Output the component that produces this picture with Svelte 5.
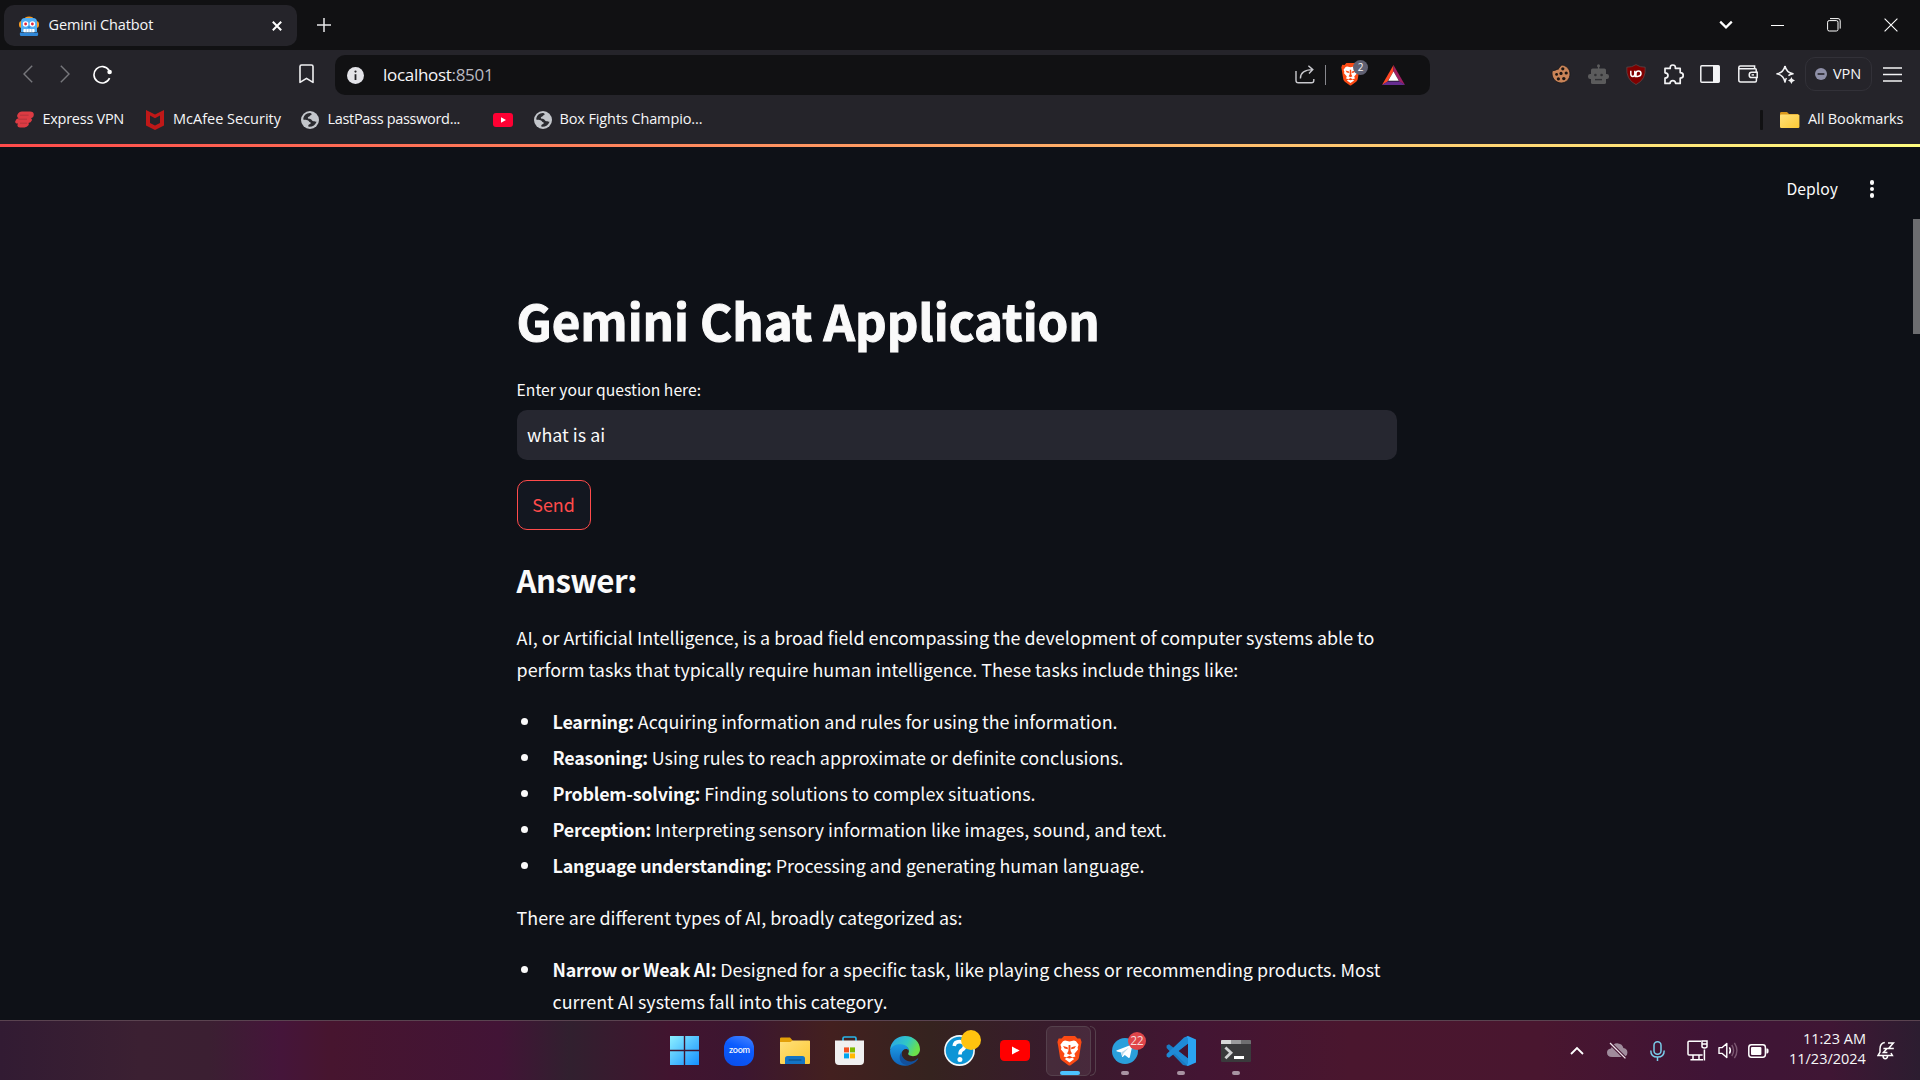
<script>
  const abilities = [
    { name: 'Learning:', text: 'Acquiring information and rules for using the information.' },
    { name: 'Reasoning:', text: 'Using rules to reach approximate or definite conclusions.' },
    { name: 'Problem-solving:', text: 'Finding solutions to complex situations.' },
    { name: 'Perception:', text: 'Interpreting sensory information like images, sound, and text.' },
    { name: 'Language understanding:', text: 'Processing and generating human language.' }
  ];
</script>

{#snippet globe()}
  <svg width="18" height="18" viewBox="0 0 18 18">
    <circle cx="9" cy="9" r="9" fill="#c3c6cb" />
    <path d="M6.2 2.6 C3.6 3.8 2.2 6 2.2 8.6 C3.6 9 5.4 9 6.6 9.2 C8 9.5 7.8 11 9.2 11.2 C10.4 11.6 9.6 13 8.4 13.2 C7.2 13.6 7 14.8 7.6 15.8 C11.4 16.2 14.4 14 15.6 10.8 C14.4 10.6 13.8 10.2 12.6 10.2 C11 10.2 11 8.8 9.8 8.2 C8.4 7.6 7 8 6.8 6.8 C6.8 5.6 8.4 6 8.8 5 C9.2 4 10.2 4.6 10.6 3.6 C10.8 3 10.4 2.4 9.8 2.2 C8.4 2 7.2 2.2 6.2 2.6 Z" fill="#2b2b30" />
  </svg>
{/snippet}

{#snippet lion(size)}
  <svg width={size} height={size * 1.2} viewBox="0 0 25 30">
    <path d="M7 0 H18 L20.4 2.6 L23.4 2.4 L24.6 6 L24 9 L22 21.5 Q21.6 23.4 20 24.6 L13.6 29.2 Q12.5 30 11.4 29.2 L5 24.6 Q3.4 23.4 3 21.5 L1 9 L.4 6 L1.6 2.4 L4.6 2.6 Z" fill="#fb4a14" />
    <path d="M8 4.6 L12.5 5.6 L17 4.6 L19 5.2 L21.6 8.8 L20.6 11.6 L21 13.4 L17.4 17.8 L18.4 20.4 L15 21.4 L17.2 23 L12.5 26.4 L7.8 23 L10 21.4 L6.6 20.4 L7.6 17.8 L4 13.4 L4.4 11.6 L3.4 8.8 L6 5.2 Z" fill="#fff" />
    <path d="M6 10 L10.6 11.2 L10.9 13.2 L7.6 12.6 Z M19 10 L14.4 11.2 L14.1 13.2 L17.4 12.6 Z M11.6 9 H13.4 L13.6 15 L15 17.4 L12.5 18.8 L10 17.4 L11.4 15 Z M9 21.6 L12.5 19.8 L16 21.6 L12.5 22.6 Z" fill="#fb4a14" />
  </svg>
{/snippet}

<div class="screen">
  <header class="tabs">
    <div class="tab">
      <svg width="20" height="20" viewBox="0 0 20 20">
        <rect x="0" y="5" width="20" height="7" rx="3" fill="#f59a23" />
        <path d="M6 1.6 Q10 -.6 14 1.6 L13 3 H7 Z" fill="#f59a23" />
        <path d="M2 6 Q2 2 6 2 H14 Q18 2 18 6 V16 H2 Z" fill="#51aef5" />
        <path d="M1 16.6 H19 Q19.6 20 18 20 H2 Q.4 20 1 16.6 Z" fill="#2f87d8" />
        <circle cx="6.6" cy="8" r="2.8" fill="#fff" /><circle cx="13.4" cy="8" r="2.8" fill="#fff" />
        <circle cx="6.6" cy="8" r="1.4" fill="#e0243a" /><circle cx="13.4" cy="8" r="1.4" fill="#e0243a" />
        <rect x="4.4" y="13" width="11.2" height="3.2" rx=".8" fill="#fff" />
        <path d="M7.2 13 V16.2 M10 13 V16.2 M12.8 13 V16.2" stroke="#6ab4ee" stroke-width=".6" />
        <rect x="8.8" y="10.4" width="2.4" height="1.6" fill="#2f87d8" />
      </svg>
      <span class="ui tab-title">Gemini Chatbot</span>
      <svg class="tab-close" width="10" height="10" viewBox="0 0 10 10"><path d="M.8 .8 L9.2 9.2 M9.2 .8 L.8 9.2" stroke="#fff" stroke-width="2" /></svg>
    </div>
    <svg class="plus" width="14" height="14" viewBox="0 0 14 14"><path d="M7 0 V14 M0 7 H14" stroke="#e8e8ea" stroke-width="1.5" /></svg>
    <div class="window">
      <span class="w1"><svg width="14" height="10" viewBox="0 0 14 10"><path d="M1.2 1.6 L7 7.4 L12.8 1.6" fill="none" stroke="#fff" stroke-width="2.2" /></svg></span>
      <span class="w2"><svg width="13" height="1" viewBox="0 0 13 1"><rect width="13" height="1" fill="#fff" /></svg></span>
      <span class="w3"><svg width="14" height="14" viewBox="0 0 14 14" fill="none" stroke="#fff"><rect x=".6" y="2.6" width="10.4" height="10.4" rx="1.6" /><path d="M3 .6 H11 Q13.2 .6 13.2 2.8 V10.6" /></svg></span>
      <span class="w4"><svg width="14" height="14" viewBox="0 0 14 14"><path d="M.6 .6 L13.4 13.4 M13.4 .6 L.6 13.4" stroke="#fff" stroke-width="1.1" /></svg></span>
    </div>
  </header>

  <div class="toolbar">
    <div class="nav">
      <span class="slot"><svg width="10" height="18" viewBox="0 0 10 18"><path d="M9.2 .8 L1 9 L9.2 17.2" fill="none" stroke="#77777c" stroke-width="1.4" /></svg></span>
      <span class="slot"><svg width="10" height="18" viewBox="0 0 10 18"><path d="M.8 .8 L9 9 L.8 17.2" fill="none" stroke="#77777c" stroke-width="1.4" /></svg></span>
      <span class="slot"><svg width="19" height="19" viewBox="0 0 19 19"><path d="M16 5.2 A8.2 8.2 0 1 0 16.6 13.2" fill="none" stroke="#fff" stroke-width="1.6" /><circle cx="16.6" cy="7" r="2.3" fill="#fff" /></svg></span>
      <span class="slot mark"><svg width="15" height="20" viewBox="0 0 15 20"><path d="M1 2.6 Q1 1 2.6 1 H12.4 Q14 1 14 2.6 V18.4 L7.5 14.4 L1 18.4 Z" fill="none" stroke="#f0f0f2" stroke-width="1.6" stroke-linejoin="round" /></svg></span>
    </div>

    <div class="address">
      <svg width="17" height="17" viewBox="0 0 17 17"><circle cx="8.5" cy="8.5" r="8.5" fill="#e3e3e8" /><path d="M8.5 7.2 V13" stroke="#222226" stroke-width="1.8" /><circle cx="8.5" cy="4.6" r="1.1" fill="#222226" /></svg>
      <span class="ui url">localhost<i>:8501</i></span>
      <div class="address-end">
        <svg width="20" height="19" viewBox="0 0 20 19"><path d="M1 6 V15.6 Q1 17.8 3.2 17.8 H16.6 Q18.8 17.8 18.8 15.6 V14 M5.4 13.4 C5.4 8 8.8 4.8 17.6 4.6 M13.4 .8 L17.8 4.6 L14 8.6" fill="none" stroke="#c9c9ce" stroke-width="1.4" /></svg>
        <b class="bar"></b>
        <span class="shield">{@render lion(19)}<em>2</em></span>
        <svg width="23" height="20" viewBox="0 0 23 20"><path d="M11.5 0 L0 20 L5.4 16.8 L11.5 6.4 Z" fill="#ff4724" /><path d="M11.5 0 L23 20 L17.6 16.8 L11.5 6.4 Z" fill="#9e1f63" /><path d="M0 20 H23 L17.6 16.4 H5.4 Z" fill="#662d91" /><path d="M11.5 6.6 L6.2 15.8 H16.8 Z" fill="#fff" /></svg>
      </div>
    </div>

    <div class="ext">
      <span class="slot"><svg width="20" height="20" viewBox="0 0 20 20"><path d="M10.6 1 C9.4 3 7.6 3.4 7.4 5.2 C5.6 4.8 4.6 7 1.4 6.6 C-.4 12.6 4 19 10.2 19 C15.2 19 19 15 19 10 C19 5 15.4 1.4 10.6 1 Z" fill="#c98458" stroke="#17171a" stroke-width=".8" /><g fill="#1b1512"><circle cx="11.8" cy="4.8" r="1.6" /><circle cx="10" cy="9.4" r="1.6" /><circle cx="15.2" cy="9" r="1.6" /><circle cx="5.6" cy="10.4" r="1.4" /><circle cx="7.4" cy="14.8" r="1.6" /><circle cx="12.8" cy="14.6" r="1.7" /></g></svg></span>
      <span class="slot"><svg width="21" height="21" viewBox="0 0 21 21"><g fill="#5b5b5c"><rect x="9.9" y="1" width="1.4" height="5" /><circle cx="10.5" cy="1.8" r="1.5" /><rect x="3" y="4.6" width="15" height="15.4" rx="1.6" /><rect x="0" y="10" width="21" height="5" rx="2.2" /></g><circle cx="7.4" cy="11" r="1.3" fill="#303033" /><circle cx="13.6" cy="11" r="1.3" fill="#303033" /><path d="M7 15.6 H14" stroke="#303033" stroke-width="1.4" /></svg></span>
      <span class="slot"><svg width="20" height="21" viewBox="0 0 20 21"><path d="M10 .6 Q14 3.4 19.2 3.2 Q20.4 15.4 10 20.6 Q-.4 15.4 .8 3.2 Q6 3.4 10 .6 Z" fill="#800000" stroke="#5c4c4e" stroke-width=".7" /><path d="M4.8 6.8 V10 Q4.8 12.4 6.8 12.4 Q8.8 12.4 8.8 10 V6.8 M8.8 12.4 H11.6 Q15 12.4 15 9.6 Q15 6.9 12.4 6.9 Q10 6.9 10 9.6 V12" fill="none" stroke="#fff" stroke-width="1.5" /></svg></span>
      <span class="slot"><svg width="21" height="21" viewBox="0 0 21 21"><path d="M2 4.4 H7.2 Q7 1 9.8 1 Q12.6 1 12.4 4.4 H17.2 V8.6 Q20.2 8.6 20.2 11.4 Q20.2 14 17.2 14 V19.4 H12.6 Q12.4 16.6 9.8 16.6 Q7.2 16.6 7 19.4 H2 V14.2 Q5 14 5 11.5 Q5 9 2 8.8 Z" fill="none" stroke="#f3f3f5" stroke-width="1.7" stroke-linejoin="round" /></svg></span>
      <span class="slot"><svg width="20" height="18" viewBox="0 0 20 18"><rect x=".8" y=".8" width="18.4" height="16.4" rx="1" fill="none" stroke="#f3f3f5" stroke-width="1.5" /><rect x="13" y=".8" width="6.4" height="16.4" fill="#f3f3f5" /></svg></span>
      <span class="slot"><svg width="20" height="18" viewBox="0 0 20 18"><path d="M18.2 7 V4.6 Q18.2 3.8 17.4 3.8 H2.4 Q.8 3.8 .8 2.4 V15 Q.8 17 2.6 17 H17.2 Q18.4 17 18.4 15.8 V12.6 M.8 2.4 Q.8 1 2.4 1 H16.6 V3.6 M19.2 7.2 H13.6 Q11.2 7.2 11.2 9.9 Q11.2 12.6 13.6 12.6 H19.2 Z" fill="none" stroke="#f3f3f5" stroke-width="1.5" /><rect x="13.6" y="9.2" width="2.4" height="1.4" fill="#f3f3f5" /></svg></span>
      <span class="slot"><svg width="19" height="19" viewBox="0 0 19 19"><path d="M9 1 Q10.2 7.4 17 8.8 Q14 9.4 12.4 10.6 M10.4 13 Q9.6 14.4 9 17 Q7.6 10.2 1 8.8 Q7.6 7.4 9 1" fill="none" stroke="#f3f3f5" stroke-width="1.5" stroke-linejoin="round" /><path d="M15.4 12 Q16 15 19 15.6 Q16 16.2 15.4 19 Q14.8 16.2 12 15.6 Q14.8 15 15.4 12 Z" fill="#f3f3f5" /></svg></span>
    </div>
    <div class="vpn"><svg width="12" height="12" viewBox="0 0 12 12"><circle cx="6" cy="6" r="6" fill="#8f90a8" /><rect x="2.6" y="5.2" width="6.8" height="1.6" fill="#25242a" /></svg><span class="ui">VPN</span></div>
    <span class="slot burger"><svg width="19" height="15" viewBox="0 0 19 15"><path d="M0 1 H19 M0 7.5 H19 M0 14 H19" stroke="#f3f3f5" stroke-width="1.6" /></svg></span>
  </div>

  <nav class="bookmarks">
    <span class="bm b1"><svg width="19" height="17" viewBox="0 0 19 17"><path d="M7 .6 H15 Q18.8 .6 18.8 3.6 Q18.8 6.8 15.8 7.2 Q17.4 7.8 16.8 9.6 Q16 12 13.4 12 Q14.4 13 13.2 14.6 Q12 16.4 9.6 16.4 H5 Q2.4 16.4 2.4 14.4 Q2.4 13.4 3 12.4 H1.4 Q-.4 12 .4 10 Q1.2 7.4 3.6 7.2 Q1.4 6 2.4 3.8 Q4 .6 7 .6 Z" fill="#dc3b43" /><path d="M5 4.2 H13.6 M3.4 8.2 H12 M5 12.2 H12" stroke="#b0343b" stroke-width=".9" /></svg><span class="ui">Express VPN</span></span>
    <span class="bm b2"><svg width="18" height="20" viewBox="0 0 18 20"><path d="M0 0 L9 4.4 L18 0 V15.4 L9 20 L0 15.4 Z M4 5.4 V13 L9 15.6 L14 13 V5.4 L9 8.2 Z" fill="#c01818" fill-rule="evenodd" /></svg><span class="ui">McAfee Security</span></span>
    <span class="bm b3">{@render globe()}<span class="ui">LastPass password...</span></span>
    <span class="bm b4"><svg width="20" height="14" viewBox="0 0 20 14"><rect width="20" height="14" rx="3" fill="#ff0033" /><path d="M8 4.2 L13 7 L8 9.8 Z" fill="#fff" /></svg></span>
    <span class="bm b5">{@render globe()}<span class="ui">Box Fights Champio...</span></span>
    <b class="sep"></b>
    <span class="bm b6"><svg width="20" height="16" viewBox="0 0 20 16"><defs><linearGradient id="fold" x1="0" y1="0" x2="1" y2="1"><stop offset="0" stop-color="#ffe07a" /><stop offset="1" stop-color="#fcc935" /></linearGradient></defs><path d="M0 1.4 Q0 0 1.4 0 H7 L9 2 H18 V6 H0 Z" fill="#d9971a" /><rect y="2.4" width="19.4" height="13.6" rx="1.2" fill="url(#fold)" /></svg><span class="ui">All Bookmarks</span></span>
  </nav>

  <main>
    <div class="decoration"></div>
    <div class="app-bar"><span class="deploy">Deploy</span><i class="dots"><b></b><b></b><b></b></i></div>
    <div class="thumb"></div>
    <div class="col">
      <h1>Gemini Chat Application</h1>
      <label for="q">Enter your question here:</label>
      <div id="q" class="input">what is ai</div>
      <button>Send</button>
      <h2>Answer:</h2>
      <p>AI, or Artificial Intelligence, is a broad field encompassing the development of computer systems able to<br />perform tasks that typically require human intelligence. These tasks include things like:</p>
      <ul>
        {#each abilities as a}
          <li><strong>{a.name}</strong> {a.text}</li>
        {/each}
      </ul>
      <p>There are different types of AI, broadly categorized as:</p>
      <ul>
        <li><strong>Narrow or Weak AI:</strong> Designed for a specific task, like playing chess or recommending products. Most<br />current AI systems fall into this category.</li>
      </ul>
    </div>
  </main>

  <footer>
    <div class="side"></div>
    <div class="apps">
      <span class="app"><svg width="29" height="29" viewBox="0 0 29 29"><defs><linearGradient id="win" x1="0" y1="0" x2="1" y2="1"><stop offset="0" stop-color="#8df0ff" /><stop offset="1" stop-color="#1490ff" /></linearGradient></defs><path d="M0 0 H13.8 V13.8 H0 Z M15.2 0 H29 V13.8 H15.2 Z M0 15.2 H13.8 V29 H0 Z M15.2 15.2 H29 V29 H15.2 Z" fill="url(#win)" /></svg></span>
      <span class="app"><span class="zoom">zoom</span></span>
      <span class="app"><svg width="30" height="27" viewBox="0 0 30 27"><path d="M0 1.6 Q0 .4 1.2 .4 H10 L13 4 H30 V10 H0 Z" fill="#e3a008" /><path d="M0 5 H10.4 L12.6 3.4 H29 Q30 3.4 30 4.4 V26 Q30 27 29 27 H1 Q0 27 0 26 Z" fill="url(#fold)" /><path d="M5 27 V21.6 Q5 19 7.6 19 H22.4 Q25 19 25 21.6 V27 Z" fill="#1474c4" /><path d="M8.6 23 H21.4" stroke="#0b4f8a" stroke-width="1.2" /></svg></span>
      <span class="app"><svg width="29" height="29" viewBox="0 0 29 29"><path d="M8 6 V2.4 Q8 1 9.4 1 H19.6 Q21 1 21 2.4 V6" fill="none" stroke="#28b5ea" stroke-width="1.7" /><path d="M0 4.6 H29 V25 Q29 29 25 29 H4 Q0 29 0 25 Z" fill="#f0f0f0" /><path d="M9 11.4 H14 V16.4 H9 Z" fill="#f25022" /><path d="M15 11.4 H20 V16.4 H15 Z" fill="#7fba00" /><path d="M9 17.4 H14 V22.4 H9 Z" fill="#00a4ef" /><path d="M15 17.4 H20 V22.4 H15 Z" fill="#ffb900" /></svg></span>
      <span class="app"><svg width="30" height="30" viewBox="0 0 30 30"><defs><linearGradient id="e1" x1="0" y1="0" x2="1" y2=".4"><stop offset=".1" stop-color="#2ba7e6" /><stop offset=".6" stop-color="#31c8c4" /><stop offset="1" stop-color="#6be04a" /></linearGradient><linearGradient id="e2" x1="0" y1="0" x2="0" y2="1"><stop offset="0" stop-color="#1c9de6" /><stop offset="1" stop-color="#0f62b8" /></linearGradient></defs><path d="M0 14 C.6 5.6 7 0 15 0 C24 0 30 6.4 30 13.2 C30 17.4 27 20.2 23 20.2 C19.8 20.2 17.8 18.8 18.2 17.6 C19.8 15.4 19 10.4 12.6 9.6 C6 9 1.4 11.6 0 14 Z" fill="url(#e1)" /><path d="M0 14.4 C1.4 9.6 6.6 7.8 11 8.2 C16 8.6 18.8 11.4 18.8 14.6 C17 11.6 11.8 13 11.6 17.6 C11.4 22 15 27.6 21 28.6 C11 32.6 0 26 0 14.4 Z" fill="url(#e2)" /><path d="M11.8 15.8 C10.6 21.6 16.4 26.2 21.4 25.4 C24.6 24.8 26.4 23.4 27.6 22.4 C28 22.2 28.4 22.6 28 23.2 C23.4 30.4 13 30.6 10.4 25 C9 21.6 9.8 18 11.8 15.8 Z" fill="#12509c" /></svg></span>
      <span class="app"><svg width="31" height="31" viewBox="0 0 31 31"><circle cx="15.5" cy="15.5" r="14.6" fill="#0d95d6" stroke="#f4fafc" stroke-width="1.6" /><path d="M10.2 11 Q10.6 6.6 15.4 6.6 Q20.6 6.6 20.6 11 Q20.6 13.6 18 15 Q16 16.2 16 19.4" fill="none" stroke="#fff" stroke-width="3.6" /><circle cx="15.9" cy="24.4" r="2.5" fill="#fff" /></svg><b class="yellow"></b></span>
      <span class="app"><svg width="30" height="21" viewBox="0 0 30 21"><rect width="30" height="21" rx="4.4" fill="#ff0000" /><path d="M12 6.4 L19.6 10.5 L12 14.6 Z" fill="#fff" /></svg></span>
      <span class="app active">{@render lion(25)}<u></u></span>
      <span class="app"><svg width="26" height="26" viewBox="0 0 26 26"><circle cx="13" cy="13" r="13" fill="#2a9fdb" /><path d="M4.4 12.6 L19.4 6.8 Q20.6 6.6 20.2 8.2 L17.8 19.2 Q17.4 20.4 16.4 19.8 L12.8 17 L11 18.8 Q10.2 19.4 10 18.4 L9 14.6 L5 13.6 Q4 13 4.4 12.6 Z" fill="#fff" /><path d="M9.2 14.4 L17 9.4 L11.4 15.4 L10.6 18.6 Z" fill="#b9d9ea" /></svg><b class="count">22</b><u></u></span>
      <span class="app"><svg width="30" height="30" viewBox="0 0 30 30"><path d="M22 0 L8.6 12.4 L3 8.2 L.6 9.4 V12 L17 29 L22 30 V22.4 L12.4 15 L22 7.6 Z" fill="#1a7cc4" /><path d="M22 30 L8.6 17.6 L3 21.8 L.6 20.6 V18 L18 1.6 L22 0 V7.6 L12.4 15 L22 22.4 Z" fill="#1f8ad6" /><path d="M22 0 L30 3.4 V26.6 L22 30 L20.6 29 Q22 28.4 22 27 V3 Q22 1.6 20.6 1 Z" fill="#2aa3f2" /></svg><u></u></span>
      <span class="app"><svg width="30" height="22" viewBox="0 0 30 22"><rect width="30" height="22" rx="1" fill="#3a3a3c" /><path d="M1 0 H10 V4 H0 V1 Q0 0 1 0 Z" fill="#d8d8d8" /><rect x="10" width="10" height="4" fill="#9a9a9c" /><path d="M20 0 H29 Q30 0 30 1 V4 H20 Z" fill="#6e6e70" /><path d="M4.4 7.4 L10 12.8 L4.4 18.2" fill="none" stroke="#d2d2d4" stroke-width="2.8" /><rect x="13" y="16" width="10" height="3" fill="#fff" /></svg><u></u></span>
    </div>
    <div class="tray">
      <span class="tr c40"><svg width="14" height="9" viewBox="0 0 14 9"><path d="M1 8 L7 2 L13 8" fill="none" stroke="#fff" stroke-width="1.8" /></svg></span>
      <span class="tr c40"><svg width="21" height="17" viewBox="0 0 21 17"><path d="M5 15 Q0 15 0 10.6 Q0 7 4 6.4 Q6 1 11 1.4 Q15.4 1.8 16.4 6 Q20.4 6.6 20.4 10.6 Q20.4 15 15.6 15 Z" fill="#a08c9c" /><path d="M3 1 L18.4 16.4" stroke="#471532" stroke-width="3.4" /><path d="M3 1 L18.4 16.4" stroke="#f0e6ee" stroke-width="1.3" /></svg></span>
      <span class="tr c40"><svg width="15" height="20" viewBox="0 0 15 20" fill="none" stroke="#79cdea" stroke-width="1.5"><rect x="4" y=".8" width="7" height="12.4" rx="3.5" /><path d="M.8 9.4 Q.8 16 7.5 16 Q14.2 16 14.2 9.4 M7.5 16 V20" /></svg></span>
      <span class="tr c40 screen-icon"><svg width="21" height="21" viewBox="0 0 21 21" fill="none" stroke="#fff" stroke-width="1.5"><path d="M14 1.2 H2 Q1 1.2 1 2.2 V14 Q1 15 2 15 H15.6 M6 15.4 V19.6 M12 15.4 V19.6 M3.4 19.8 H16" /><path d="M17.4 9.6 V20.6 M15 1 H20 V6.6 Q20 8 17.5 8 Q15 8 15 6.6 Z M15 4 H20" /></svg></span>
      <span class="tr c30"><svg width="21" height="17" viewBox="0 0 21 17" fill="none" stroke-width="1.4"><path d="M1 5.6 H4.2 L8.8 1.4 V15.6 L4.2 11.4 H1 Z" stroke="#fff" stroke-linejoin="round" /><path d="M11.4 5.4 Q13.4 8.5 11.4 11.6" stroke="#fff" /><path d="M13.8 3 Q17.4 8.5 13.8 14 M16.4 .8 Q21.4 8.5 16.4 16.2" stroke="#7c5872" /></svg></span>
      <span class="tr c30"><svg width="21" height="14" viewBox="0 0 21 14"><rect x=".8" y=".8" width="16.6" height="12.4" rx="2.6" fill="none" stroke="#fff" stroke-width="1.5" /><rect x="3" y="3" width="10.4" height="8" rx="1" fill="#fff" /><path d="M18.4 4.6 H19.4 Q20.6 4.6 20.6 7 Q20.6 9.4 19.4 9.4 H18.4 Z" fill="#fff" /></svg></span>
      <div class="clock"><span class="ui">11:23 AM</span><span class="ui">11/23/2024</span></div>
      <span class="bell"><svg width="18" height="19" viewBox="0 0 18 19" fill="none" stroke="#fff" stroke-width="1.5"><path d="M7.8 1.6 Q3 2.4 3 8 V11 L1 14.6 H15.4 L14 12 M6 15 Q6.2 17.8 8.2 17.8 Q10.4 17.8 10.6 15 M11 2 H16.4 L11.6 7.4 H16.8 M6.4 7.4 H10 L6.4 11.4 H10.4" /></svg></span>
    </div>
  </footer>
</div>

<style>
  :global(body) { margin: 0; background: #0e1117; overflow: hidden; }
  svg { display: block; flex: none; }
  .screen { width: 1920px; height: 1080px; display: flex; flex-direction: column; font-family: 'Noto Sans CJK SC', 'Noto Sans', sans-serif; color: #fafafa; overflow: hidden; }
  .ui { font-family: 'Open Sans', 'Noto Sans', sans-serif; font-size: 14.5px; line-height: 20px; color: #f6f6f8; white-space: nowrap; }

  .tabs { height: 50px; flex: none; background: #111113; display: flex; align-items: center; padding-left: 4px; }
  .tab { width: 293px; height: 41px; margin-top: 1px; box-sizing: border-box; border-radius: 10px; background: #25242a; display: flex; align-items: center; padding: 0 15px; }
  .tab-title { margin-left: 9.5px; padding-bottom: 2px; letter-spacing: -.1px; }
  .tab-close { margin-left: auto; }
  .plus { margin-left: 20px; }
  .window { margin-left: auto; display: flex; align-items: center; height: 50px; }
  .window span { display: flex; justify-content: center; }
  .w1 { width: 46px; } .w2 { width: 56px; } .w3 { width: 57px; } .w4 { width: 58px; }

  .toolbar { height: 45px; flex: none; background: #25242a; display: flex; align-items: center; padding-top: 3px; box-sizing: border-box; }
  .slot { width: 37.4px; display: flex; justify-content: center; flex: none; }
  .nav { width: 335px; box-sizing: border-box; padding: 0 10px 0 9px; display: flex; align-items: center; flex: none; }
  .mark { margin-left: auto; }
  .address { width: 1095px; height: 40px; margin-top: 2px; flex: none; border-radius: 10px; background: #111113; display: flex; align-items: center; box-sizing: border-box; padding: 0 25px 0 12px; }
  .url { font-size: 17px; line-height: 24px; margin-left: 19px; letter-spacing: -.3px; }
  .url i { font-style: normal; color: #b9b9c0; }
  .address-end { margin-left: auto; display: flex; align-items: center; }
  .bar { width: 1px; height: 20px; background: #88888e; margin: 0 15px 0 10px; }
  .shield { position: relative; margin-right: 22px; margin-bottom: 1px; }
  .shield em { position: absolute; left: 12px; top: -3px; width: 15px; height: 15px; border-radius: 50%; background: #5f6072; font: 10px/15px 'Open Sans', sans-serif; text-align: center; }
  .ext { display: flex; align-items: center; margin-left: 112.2px; }
  .vpn { width: 67px; height: 34px; margin-left: 1px; box-sizing: border-box; border: 1px solid #323138; border-radius: 10px; display: flex; align-items: center; padding-left: 9px; gap: 6px; }
  .burger { margin-left: 1.6px; }

  .bookmarks { height: 49px; flex: none; background: #25242a; display: flex; align-items: center; }
  .bm { display: flex; align-items: center; flex: none; }
  .bm .ui { padding-bottom: 2px; }
  .b1 { margin-left: 15px; width: 131px; gap: 8.5px; letter-spacing: -.27px; }
  .b2 { width: 155px; gap: 9px; }
  .b3 { width: 192px; gap: 8.5px; letter-spacing: -.32px; }
  .b4 { width: 41px; }
  .b5 { gap: 7.5px; letter-spacing: -.12px; }
  .sep { margin-left: auto; width: 3px; height: 20px; border-radius: 1px; background: #111113; }
  .b6 { margin-left: 17px; width: 140px; gap: 8px; letter-spacing: -.1px; }

  main { height: 876px; flex: none; position: relative; background: #0e1117; overflow: hidden; }
  .decoration { height: 3px; background: linear-gradient(90deg, #ff4b4b, #fffd80); }
  .app-bar { height: 84px; display: flex; align-items: center; justify-content: flex-end; gap: 32.2px; padding-right: 45.6px; }
  .deploy { font-size: 15.7px; line-height: 28px; }
  .dots { display: flex; flex-direction: column; gap: 2px; }
  .dots b { width: 4.4px; height: 4.4px; border-radius: 50%; background: #fafafa; }
  .thumb { position: absolute; right: 0; top: 75px; width: 7px; height: 115px; background: #6c6d70; }
  .col { width: 880px; margin: 56px 0 0 516.6px; font-size: 17.9px; line-height: 32px; white-space: nowrap; }
  h1 { font-size: 49.2px; line-height: 66px; font-weight: 700; margin: 0; -webkit-text-stroke: 1px #fafafa; letter-spacing: -.05px; }
  label { display: block; font-size: 15.7px; line-height: 28px; margin-top: 23px; }
  .input { margin-top: 6px; height: 50px; line-height: 48px; border-radius: 10px; background: #262730; padding-left: 10.5px; box-sizing: border-box; }
  button { display: block; margin: 20px 0 0; width: 74px; height: 50px; box-sizing: border-box; border: 1px solid #ff4b4b; border-radius: 10px; background: #131720; color: #ff4b4b; font: inherit; line-height: 46px; padding: 0 0 2px; text-align: center; }
  h2 { font-size: 31.3px; line-height: 42px; font-weight: 600; margin: 29px 0 0; letter-spacing: -.65px; }
  h2 + p { margin-top: 19.5px; }
  p { margin: 20px 0 0; }
  ul { list-style: none; margin: 20px 0 0; padding: 0 0 0 36px; }
  li { margin-bottom: 4px; position: relative; }
  li::before { content: ''; position: absolute; left: -32px; top: 13.5px; width: 7px; height: 7px; border-radius: 50%; background: #fafafa; }
  li:last-child { margin-bottom: 0; }
  strong { font-weight: 600; letter-spacing: -.25px; }

  footer { height: 60px; flex: none; box-sizing: border-box; border-top: 1px solid #5a4350; display: flex; align-items: center; background: linear-gradient(90deg, #321b33 0, #3b2032 140px, #3b1f32 210px, #45153a 280px, #47152f 330px, #421436 500px, #31202f 570px, #41142f 670px, #3c1630 740px, #43201f 830px, #35231f 930px, #381b2c 1050px, #431533 1200px, #4a162e 1350px, #49162f 1540px, #3f1436 1720px, #3f1634 1830px, #2c1d30 1920px); }
  .side, .tray { width: 656.7px; flex: none; box-sizing: border-box; }
  .apps { display: flex; align-items: center; flex: none; height: 59px; }
  .app { width: 55.15px; height: 50px; display: flex; align-items: center; justify-content: center; position: relative; }
  .zoom { width: 30px; height: 30px; border-radius: 12px; background: linear-gradient(200deg, #4a86ff 0, #0b5cff 40%, #0a4de8); font: 600 9px/28px Lato, sans-serif; text-align: center; letter-spacing: -.2px; }
  .yellow { position: absolute; width: 20px; height: 20px; border-radius: 50%; background: #ffc30f; right: 7px; top: 4px; }
  .active::before { content: ''; position: absolute; left: 3px; top: 0; width: 43px; height: 48px; border: 1px solid #55404c; border-radius: 6px; background: #ffffff12; }
  .active::after { content: ''; position: absolute; left: 47px; top: 0; width: 5px; height: 48px; border: 1px solid #55404c; border-left: 0; border-radius: 0 6px 6px 0; }
  .active svg, .active u { z-index: 1; }
  .active svg { margin-right: 1px; }
  .app u { position: absolute; bottom: 1px; left: 50%; width: 8px; height: 4px; margin-left: -4px; border-radius: 2px; background: #a893a2; }
  .active u { width: 20px; margin-left: -10px; background: #4cc2ff; }
  .count { position: absolute; left: 30px; top: 6px; width: 18px; height: 18px; border-radius: 9px; background: #e0454a; color: #f6dcdc; font: 12px/17px 'Open Sans', sans-serif; text-align: center; letter-spacing: -.4px; }
  .tray { display: flex; align-items: center; justify-content: flex-end; padding-right: 25px; }
  .tr { display: flex; justify-content: center; flex: none; }
  .c40 { width: 40px; } .c30 { width: 30px; }
  .screen-icon { margin-right: -4px; }
  .clock { display: flex; flex-direction: column; align-items: flex-end; width: 92.5px; padding-bottom: 4px; }
  .bell { margin-left: 11px; }
</style>
